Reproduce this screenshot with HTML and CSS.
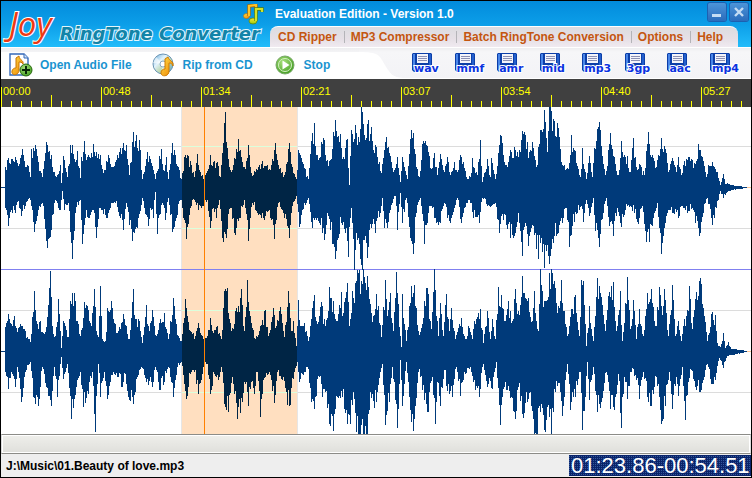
FILE: index.html
```html
<!DOCTYPE html>
<html lang="en">
<head>
  <meta charset="utf-8">
  <title>Joy RingTone Converter</title>
  <link rel="stylesheet" href="styles.css">
</head>
<body>
  <svg class="defs" width="0" height="0" aria-hidden="true">
    <defs>
      <linearGradient id="gold" x1="0" y1="0" x2="1" y2="1">
        <stop offset="0" stop-color="#ffe04a"/><stop offset="1" stop-color="#ee8200"/>
      </linearGradient>
      <linearGradient id="lime" x1="0" y1="0" x2="0" y2="1">
        <stop offset="0" stop-color="#ffe63c"/><stop offset="1" stop-color="#9ccc08"/>
      </linearGradient>
      <radialGradient id="green" cx="0.4" cy="0.35" r="0.7">
        <stop offset="0" stop-color="#a9e07c"/><stop offset="1" stop-color="#3f9c1e"/>
      </radialGradient>
      <linearGradient id="disc" x1="0" y1="0" x2="1" y2="1">
        <stop offset="0" stop-color="#5aa6d8"/><stop offset="0.35" stop-color="#e2f2fc"/>
        <stop offset="0.6" stop-color="#bcd8b0"/><stop offset="1" stop-color="#4c98d0"/>
      </linearGradient>
      <symbol id="floppy" viewBox="0 0 21 21">
        <path d="M1 0h18l1 1v18H2l-2-2V1z" fill="#0c3ea8"/>
        <path d="M1 1h2v16H1z" fill="#4a86e8"/>
        <path d="M17 1h2v17h-2z" fill="#2460cc"/>
        <path d="M5 1h11v9H5z" fill="#f4f4fa"/>
        <path d="M6 3h9v1H6zM6 5h9v1H6zM6 7h9v1H6z" fill="#8c90b4"/>
        <path d="M5 13h11v6H5z" fill="#c6d4f2"/>
      </symbol>
    </defs>
  </svg>

  <div class="window">
    <header class="header">
      <h1 class="logo">
        <span class="logo-joy">Joy</span>
        <span class="logo-name">RingTone Converter</span>
        <svg class="logo-notes" width="22" height="21" viewBox="0 0 22 21" aria-hidden="true">
          <ellipse cx="3.500" cy="12" rx="3" ry="2.500" fill="url(#gold)" stroke="#b86c00" stroke-width="0.6"/>
          <path d="M6 12V2l7-1v8" fill="none" stroke="#a86400" stroke-width="3.4"/>
          <path d="M6 12V2l7-1v8" fill="none" stroke="#ffc428" stroke-width="2.2"/>
          <ellipse cx="10" cy="17" rx="4" ry="3" fill="url(#lime)" stroke="#5c8410" stroke-width="0.8"/>
          <path d="M13 17V5l6 0v3" fill="none" stroke="#4d7c10" stroke-width="3.4"/>
          <path d="M13 17V5l6 0v3" fill="none" stroke="#d4e428" stroke-width="2.2"/>
        </svg>
      </h1>
      <div class="header-main">
        <div class="titlebar">
          <span class="title">Evaluation Edition - Version 1.0</span>
          <button class="win-btn" aria-label="Minimize">
            <svg width="18" height="18" viewBox="0 0 18 18"><path d="M4 11h9v3H4z" fill="#c4dcf4"/></svg>
          </button>
          <button class="win-btn" aria-label="Close">
            <svg width="18" height="18" viewBox="0 0 18 18"><path d="M5 5l8 8M13 5l-8 8" stroke="#c4dcf4" stroke-width="2.4"/></svg>
          </button>
        </div>
        <nav class="menu">
          <a href="#">CD Ripper</a>
          <a href="#">MP3 Compressor</a>
          <a href="#">Batch RingTone Conversion</a>
          <a href="#">Options</a>
          <a href="#">Help</a>
        </nav>
      </div>
    </header>

    <div class="toolbar">
      <div class="actions">
        <button class="action">
          <svg width="24" height="24" viewBox="0 0 24 24" aria-hidden="true">
            <path d="M1 1h14l4 4v17H1z" fill="#fff" stroke="#3468b8" stroke-width="1.4"/>
            <path d="M15 1v4h4" fill="#cfe2f8" stroke="#3468b8"/>
            <path d="M7 15V5l3-2c0 4 5 4 4 8-1-2-3-2-4-2v8c0 6-8 6-7 1 1-3 3-3 4-3z" fill="url(#gold)" stroke="#c87400"/>
            <circle cx="17" cy="17" r="6" fill="url(#green)" stroke="#2a6a10"/>
            <path d="M17 13v8M13 17h8" stroke="#082808" stroke-width="2"/>
          </svg>
          Open Audio File
        </button>
        <button class="action">
          <svg width="24" height="24" viewBox="0 0 24 24" aria-hidden="true">
            <circle cx="11" cy="11" r="10" fill="url(#disc)" stroke="#6a94b4"/>
            <path d="M11 11L4 4l-3 6zM11 11l-2 9 6 0z" fill="#fff" opacity="0.6"/>
            <circle cx="11" cy="11" r="3" fill="#fff" stroke="#88aac4"/>
            <path d="M13 16V6l3-2c1 4 6 4 5 9-1-3-3-3-4-3v8c0 6-8 6-8 2 0-3 2-4 4-4z" fill="url(#gold)" stroke="#d07c00"/>
          </svg>
          Rip from CD
        </button>
        <button class="action">
          <svg width="24" height="24" viewBox="-2 -2 24 24" aria-hidden="true">
            <circle cx="10" cy="10" r="9" fill="url(#green)" stroke="#78a868"/>
            <circle cx="10" cy="10" r="6.500" fill="none" stroke="#d4f0c4"/>
            <path d="M7.500 5.500l7 4.500-7 4.500z" fill="#fff"/>
          </svg>
          Stop
        </button>
      </div>
      <svg class="curve" width="44" height="31" viewBox="0 0 44 31" aria-hidden="true">
        <path d="M0 5C20 5 20 8 26 18S34 30 44 31H0z" fill="#fff"/>
      </svg>
      <div class="formats">
        <button class="format"><svg width="21" height="21"><use href="#floppy"/></svg><span>wav</span></button>
        <button class="format"><svg width="21" height="21"><use href="#floppy"/></svg><span>mmf</span></button>
        <button class="format"><svg width="21" height="21"><use href="#floppy"/></svg><span>amr</span></button>
        <button class="format"><svg width="21" height="21"><use href="#floppy"/></svg><span>mid</span></button>
        <button class="format"><svg width="21" height="21"><use href="#floppy"/></svg><span>mp3</span></button>
        <button class="format"><svg width="21" height="21"><use href="#floppy"/></svg><span>3gp</span></button>
        <button class="format"><svg width="21" height="21"><use href="#floppy"/></svg><span>aac</span></button>
        <button class="format"><svg width="21" height="21"><use href="#floppy"/></svg><span>mp4</span></button>
      </div>
    </div>

    <ol class="ruler">
      <li>00:00</li>
      <li>00:48</li>
      <li>01:34</li>
      <li>02:21</li>
      <li>03:07</li>
      <li>03:54</li>
      <li>04:40</li>
      <li>05:27</li>
    </ol>

    <main class="wave">
      <svg class="wave-svg" viewBox="0 0 750 327" preserveAspectRatio="none" shape-rendering="crispEdges" role="img" aria-label="Waveform">
        <defs>
          <clipPath id="selection"><rect x="181" y="0" width="115" height="327"/></clipPath>
        </defs>
        <rect class="sel" x="180" y="0" width="117" height="327"/>
        <path class="grid" d="M0 39h750v1H0zM0 121h750v1H0zM0 203h750v1H0zM0 285h750v1H0z"/>
        <path class="grid-sel" clip-path="url(#selection)" d="M0 39h750v1H0zM0 121h750v1H0zM0 203h750v1H0zM0 285h750v1H0z"/>
        <path class="sel-edge" d="M180 0h1v327h-1zM296 0h1v327h-1z"/>
        <path class="divider" d="M0 162h750v1H0z"/>
        <path class="zero" d="M0 80h750v1H0zM0 244h750v1H0z"/>
        <path class="samples" id="samples"/>
        <path class="samples-sel" id="samplesSel" clip-path="url(#selection)"/>
        <path class="cursor" d="M203 0h1v327h-1z"/>
      </svg>
    </main>

    <div class="scrollbar"><div class="thumb"></div></div>

    <footer class="status">
      <span class="file">J:\Music\01.Beauty of love.mp3</span>
      <output class="clock">01:23.86-00:54.51</output>
    </footer>
  </div>

  <script src="wave.js"></script>
</body>
</html>
```

FILE: styles.css
```css
* {
  box-sizing: border-box;
}

body {
  margin: 0;
  font-family: "Liberation Sans", Arial, sans-serif;
  font-size: 12px;
}

button {
  border: none;
  background: none;
  padding: 0;
  font: inherit;
  cursor: pointer;
}

.defs {
  position: absolute;
}

.window {
  display: flex;
  flex-direction: column;
  height: 100vh;
  border: 1px solid #000;
}

/* header */
.header {
  display: flex;
  height: 46px;
  flex-shrink: 0;
  background: linear-gradient(#028bdc, #0c9ee8 50%, #22bcfa);
}

.logo {
  position: relative;
  display: flex;
  align-items: flex-end;
  gap: 8px;
  width: 269px;
  margin: 0;
  padding-left: 8px;
  white-space: nowrap;
}

.logo-joy {
  font-family: "Open Sans", sans-serif;
  font-size: 33px;
  line-height: 46px;
  font-weight: 400;
  font-style: italic;
  color: #ee3a14;
  -webkit-text-stroke: 2px #fff;
  paint-order: stroke fill;
}

.logo-name {
  font-family: "DejaVu Sans", sans-serif;
  font-size: 18px;
  line-height: 26px;
  font-style: italic;
  color: #1284a8;
  -webkit-text-stroke: 2px #e4f6fc;
  paint-order: stroke fill;
}

.logo-notes {
  position: absolute;
  right: 5px;
  top: 3px;
}

.header-main {
  flex: 1;
  display: flex;
  flex-direction: column;
}

.titlebar {
  display: flex;
  gap: 4px;
  height: 25px;
  padding: 2px 3px 0 5px;
}

.title {
  flex: 1;
  line-height: 22px;
  font-weight: bold;
  color: #fff;
}

.win-btn {
  width: 18px;
  height: 18px;
  border-radius: 2px;
  background: linear-gradient(#4c94d8, #2a6cbc);
  box-shadow: 0 0 0 1px #1c60b0;
}

.win-btn svg {
  display: block;
}

.menu {
  display: flex;
  height: 21px;
  margin-right: 13px;
  padding-left: 8px;
  border-top: 1px solid #fff;
  border-radius: 8px 8px 0 0;
  background: linear-gradient(#dcdce0, #e6e0e6 60%, #f0eaf0);
}

.menu a {
  display: flex;
  align-items: center;
  height: 20px;
  color: #c45610;
  font-weight: bold;
  text-decoration: none;
  white-space: nowrap;
}

.menu a + a::before {
  content: "";
  width: 1px;
  height: 12px;
  margin: 0 6px 0 7px;
  background: #b4b4b8;
}

/* toolbar */
.toolbar {
  display: flex;
  height: 32px;
  flex-shrink: 0;
  background: linear-gradient(#fff 1px, #eeeef0 1px, #f6f6f8 5px, #f3f3f6);
  border-bottom: 1px solid #fff;
}

.actions {
  display: flex;
  gap: 20px;
  width: 358px;
  padding: 0 8px;
  background: linear-gradient(#fff 1px, #eeeef0 1px, #f4f4f6 5px, #fff 5px);
}

.action {
  display: flex;
  align-items: center;
  gap: 7px;
  padding-top: 4px;
  color: #1a94d0;
  font-weight: bold;
  white-space: nowrap;
}

.formats {
  flex: 1;
  display: flex;
  justify-content: space-between;
  padding: 5px 14px 0 9px;
}

.format {
  position: relative;
  width: 27px;
  height: 22px;
  text-align: left;
}

.format svg {
  display: block;
}

.format span {
  position: absolute;
  left: 2px;
  bottom: -1px;
  font-family: "DejaVu Sans", sans-serif;
  font-size: 11px;
  line-height: 12px;
  font-weight: bold;
  color: #0a32e0;
  -webkit-text-stroke: 2px #fff;
  paint-order: stroke fill;
}

/* time ruler */
.ruler {
  display: flex;
  height: 28px;
  flex-shrink: 0;
  margin: 0;
  padding: 0;
  overflow: hidden;
  list-style: none;
  font-size: 11px;
  color: #ffff00;
  background:
    repeating-linear-gradient(90deg, #ffff00 0 1px, transparent 1px 50px) 0 100% / 100% 12px no-repeat,
    repeating-linear-gradient(90deg, #ffff00 0 1px, transparent 1px 10px) 0 100% / 100% 6px no-repeat,
    #404040;
}

.ruler li {
  flex: 0 0 100px;
  height: 20px;
  margin-top: 8px;
  padding-left: 1px;
  border-left: 1px solid #ffff00;
  line-height: 8px;
}

/* waveform */
.wave {
  flex: 1;
  min-height: 0;
  background: #fff;
}

.wave-svg {
  display: block;
  width: 100%;
  height: 100%;
}

.sel {
  fill: #ffdfc0;
}

.sel-edge {
  fill: #e6e6e6;
}

.grid {
  fill: #dcdcdc;
}

.grid-sel {
  fill: #dcffdc;
}

.divider {
  fill: #8080f0;
}

.zero {
  fill: #ffc896;
}

.samples {
  fill: #003a7a;
}

.samples-sel {
  fill: #002545;
}

.cursor {
  fill: #ff8000;
}

/* bottom */
.scrollbar {
  height: 20px;
  flex-shrink: 0;
  padding: 1px;
  border: 1px solid #8c8c88;
  border-left-color: #dcdcdc;
  border-right-color: #dcdcdc;
  background: #fff;
}

.thumb {
  height: 100%;
  background: linear-gradient(#eeeeea, #e0e0dc);
}

.status {
  display: flex;
  justify-content: space-between;
  align-items: center;
  height: 23px;
  flex-shrink: 0;
  padding-left: 5px;
  background: #eeeeee;
}

.file {
  font-weight: bold;
}

.clock {
  width: 182px;
  height: 21px;
  padding-left: 2px;
  font-size: 22px;
  line-height: 21px;
  color: #fff;
  white-space: nowrap;
  background:
    repeating-linear-gradient(90deg, transparent 0 1px, #0a246a 1px 2px),
    repeating-linear-gradient(#0a246a 0 1px, #34589c 1px 2px);
}
```

FILE: wave.js
```javascript
// envelope of each half wave: "x:amplitude", both in pixels
const channels = [
  {
    center: 80,
    up: "5:20 8:29 12:28 15:30 18:21 22:38 24:26 28:21 30:10 31:38 35:42 38:25 42:10 46:45 48:35 51:32 53:15 57:12 60:22 61:4 63:31 67:10 70:42 72:42 75:25 77:36 80:9 81:30 84:46 85:33 89:30 91:34 93:43 96:35 98:33 100:32 103:14 108:32 111:20 115:25 120:39 123:44 126:42 129:12 133:55 136:52 139:47 142:8 147:35 151:24 155:8 159:31 161:38 164:16 166:30 168:8 172:44 175:32 178:20 181:8 184:30 188:31 191:22 194:10 197:33 200:15 204:10 208:18 210:32 213:25 217:25 220:10 223:44 225:75 226:45 229:20 232:17 236:38 238:48 241:30 245:18 248:42 251:14 255:15 262:26 269:18 272:28 275:44 278:22 284:12 288:38 289:44 292:20 296:8 298:37 302:25 308:8 311:46 314:64 317:32 321:45 324:47 327:27 330:27 335:67 337:50 340:53 343:30 347:48 349:2 351:57 355:62 358:50 361:81 362:75 365:47 367:63 371:60 375:42 376:40 379:25 381:14 385:45 386:50 389:34 393:15 397:30 400:5 402:30 407:8 411:57 413:54 416:20 419:10 422:43 425:46 429:31 431:18 434:34 437:12 440:33 444:15 447:30 450:12 454:25 457:15 460:32 463:25 466:10 470:10 472:29 477:12 480:47 482:5 487:28 490:10 491:29 495:8 498:34 500:52 502:44 504:25 507:20 510:37 514:40 519:37 522:56 524:55 529:35 532:45 536:20 540:57 542:55 544:77 547:35 549:80 553:68 557:64 560:38 565:17 568:18 571:52 575:36 580:10 582:39 586:8 589:31 592:10 594:39 599:65 602:31 605:12 610:54 614:30 618:12 621:46 625:30 627:31 630:15 633:49 636:20 640:22 644:12 646:36 648:55 652:32 656:20 661:49 666:34 668:15 672:29 676:15 678:30 681:12 684:26 689:30 694:24 698:43 702:30 706:10 708:22 712:25 715:18 717:15 720:2 723:13 725:3 727:4 731:2 738:1 747:0",
    down: "5:20 8:38 12:25 15:25 17:14 21:28 25:18 30:12 34:44 38:22 42:15 47:60 49:50 51:42 54:15 60:22 62:3 64:22 68:15 72:71 75:25 80:12 82:56 85:30 88:30 93:22 96:50 100:20 107:30 110:20 115:15 120:30 123:42 126:15 129:37 132:53 137:40 142:10 148:38 151:22 153:30 155:4 157:46 162:15 165:32 168:10 172:44 176:30 180:12 182:20 186:51 190:20 194:12 198:22 203:18 207:12 210:40 213:20 216:30 219:12 222:50 226:50 230:20 235:47 240:30 244:12 248:53 252:15 257:25 264:32 270:30 274:51 278:15 283:25 289:50 292:18 296:8 299:39 302:22 308:10 312:40 317:30 322:45 324:52 328:28 335:71 337:52 341:35 345:45 348:69 351:20 354:82 357:52 362:82 365:48 367:70 371:40 375:45 376:33 380:25 382:10 384:40 387:40 392:15 395:8 397:42 400:5 402:35 406:10 410:50 413:66 416:25 420:10 424:56 428:25 431:18 436:35 440:35 444:15 447:30 450:35 454:20 457:10 461:35 464:20 469:12 473:30 479:35 482:10 487:18 491:18 495:15 499:45 503:32 510:50 515:45 518:25 522:68 525:35 528:58 532:37 538:71 541:50 544:80 549:76 554:48 557:46 562:35 566:20 569:59 572:38 577:25 581:18 583:34 586:12 589:28 593:10 595:43 599:59 603:25 606:10 609:38 613:48 617:20 621:39 625:22 630:18 634:25 638:36 642:18 646:54 649:54 653:30 657:15 661:66 664:40 668:22 673:25 678:30 682:18 687:25 692:20 695:35 699:48 703:25 707:10 712:37 716:20 720:3 723:10 727:4 732:2 747:0"
  },
  {
    center: 244,
    up: "5:24 8:37 12:25 14:35 17:19 20:27 25:20 30:9 34:60 36:30 40:30 43:18 47:34 50:80 52:25 55:15 58:52 61:3 63:30 68:14 70:50 74:58 77:30 80:15 84:49 87:45 91:25 94:62 96:20 98:14 100:65 102:12 105:10 107:43 111:50 114:28 118:20 123:37 126:25 129:12 133:62 135:32 139:30 142:8 146:46 149:20 152:41 156:15 159:28 164:38 168:12 173:53 177:16 181:10 185:52 187:35 190:20 195:15 198:28 203:12 207:15 210:33 213:18 217:25 221:12 224:60 227:63 231:20 235:40 238:45 241:62 244:20 247:71 250:35 255:12 259:20 265:41 268:15 273:43 276:25 280:44 284:14 288:60 291:20 293:30 296:5 298:51 300:25 304:28 308:10 311:32 314:56 316:30 321:49 325:25 329:64 333:50 336:30 341:59 343:38 347:68 349:25 352:60 355:68 358:78 361:70 363:82 367:75 369:52 373:35 375:42 376:57 378:45 381:14 385:71 387:35 390:58 393:20 396:79 397:58 401:4 402:57 406:10 411:65 414:66 418:20 420:19 424:50 427:63 431:22 434:82 437:30 438:15 440:48 443:15 446:57 449:20 451:43 455:12 461:33 465:12 468:25 472:12 474:30 480:42 483:8 487:40 490:12 492:32 495:12 498:64 501:56 505:30 508:50 512:30 515:62 518:40 522:75 525:53 528:53 532:30 534:60 538:20 540:82 542:60 545:50 549:78 551:82 554:70 557:38 561:71 564:40 567:15 571:42 575:56 579:15 581:71 583:70 586:5 589:45 593:10 595:35 597:73 600:58 605:20 608:55 613:69 616:20 620:60 622:10 627:74 630:22 633:51 636:12 639:42 643:15 647:58 651:62 655:25 659:64 663:45 664:62 668:15 672:66 675:15 678:30 681:10 684:32 688:40 689:65 692:22 695:52 699:70 701:67 704:35 707:10 711:37 715:36 717:8 720:4 723:18 725:3 728:9 731:2 735:2 740:1 747:0",
    down: "5:20 8:37 11:20 15:35 17:15 21:50 25:20 30:10 33:45 38:54 42:15 46:35 51:54 54:15 57:45 61:5 63:27 67:12 71:67 76:35 80:20 83:55 88:42 92:20 95:80 98:12 100:45 104:20 107:47 110:30 113:20 118:25 122:35 125:22 128:45 133:52 137:25 141:15 146:30 152:35 155:15 159:38 164:30 168:15 173:45 177:15 181:10 186:47 190:22 194:20 198:42 203:15 207:12 210:42 214:22 218:28 221:15 224:52 228:60 232:25 237:67 242:50 246:30 248:54 251:30 254:42 257:20 260:65 263:28 269:20 274:51 277:20 282:28 287:53 290:53 294:20 297:10 299:30 304:20 307:15 311:50 314:57 319:25 322:45 325:40 329:72 333:79 337:45 342:45 347:72 350:72 353:40 356:80 359:82 364:82 367:82 370:40 374:56 376:50 380:20 382:12 385:73 389:50 392:15 397:76 400:8 402:54 406:10 411:70 413:79 418:20 420:25 424:48 428:60 432:25 435:72 437:30 440:54 444:18 447:39 452:45 456:15 460:44 465:22 470:15 475:38 479:45 483:12 487:35 492:37 496:10 500:73 504:35 507:38 511:45 515:67 518:35 523:66 527:50 530:40 534:82 537:82 540:60 545:80 549:65 551:82 555:40 560:40 562:64 566:20 567:12 570:58 575:45 580:20 582:78 585:45 587:10 589:48 593:15 597:60 601:50 606:20 610:57 614:58 618:22 621:76 624:25 627:47 631:20 636:28 639:47 643:20 648:50 651:54 656:25 661:72 665:54 669:20 672:57 676:25 678:44 682:15 685:68 688:30 691:18 695:35 700:40 704:25 707:12 711:32 715:28 719:6 723:16 727:4 731:3 747:0"
  }
];

let seed = 7;

function random() {
  seed = (seed * 16807) % 2147483647;
  return seed / 2147483647;
}

// one value per pixel column, a bit rough between the given points
function expand(text) {
  const points = text.split(" ").map(p => p.split(":").map(Number));
  const values = [];
  for (let i = 0; i < points.length - 1; i++) {
    const [x0, a0] = points[i];
    const [x1, a1] = points[i + 1];
    for (let x = x0; x < x1; x++) {
      const a = a0 + (a1 - a0) * (x - x0) / (x1 - x0);
      values[x] = x === x0 ? a : Math.round(a * (0.72 + random() * 0.36));
    }
  }
  return values;
}

let d = "";
for (const { center, up, down } of channels) {
  const top = expand(up);
  const bottom = expand(down);
  d += `M0 ${center}h4v1h-4z`;
  for (let x = 5; x < 747; x++) {
    d += `M${x - 1} ${center - top[x]}h1V${center + 1 + bottom[x]}h-1z`;
  }
}

document.getElementById("samples").setAttribute("d", d);
document.getElementById("samplesSel").setAttribute("d", d);
```
